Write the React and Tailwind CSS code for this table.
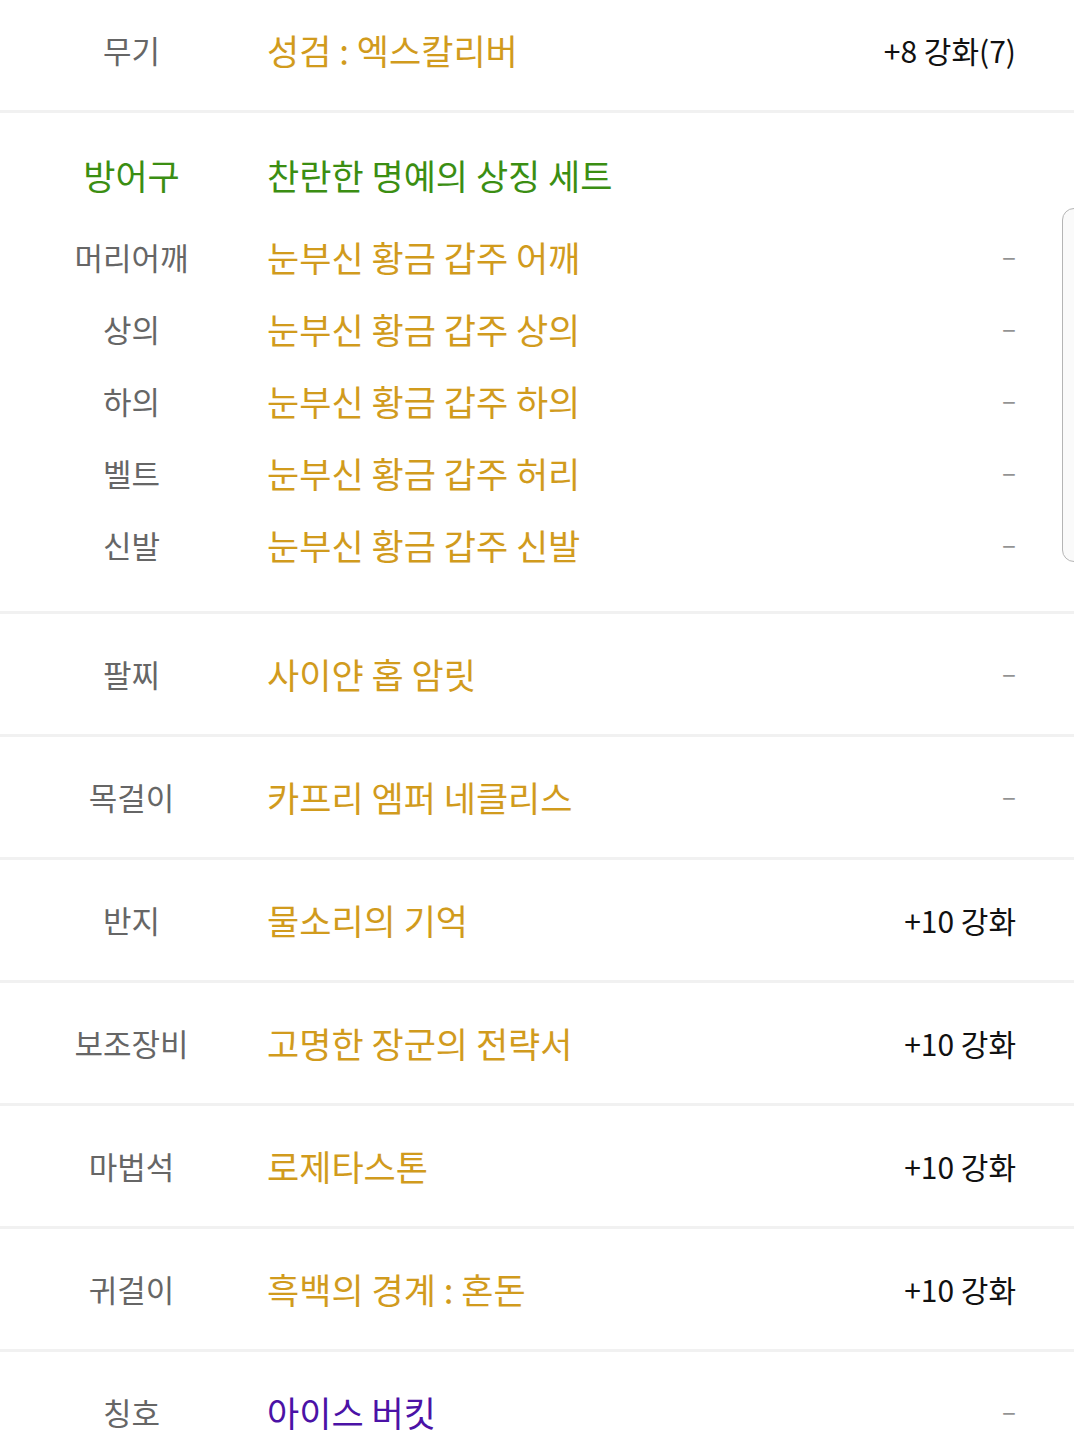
import React from 'react';

// Equipment rows shown below the armour set
const items = [
  { label: '팔찌', name: '사이얀 홉 암릿', value: null },
  { label: '목걸이', name: '카프리 엠퍼 네클리스', value: null },
  { label: '반지', name: '물소리의 기억', value: '+10 강화' },
  { label: '보조장비', name: '고명한 장군의 전략서', value: '+10 강화' },
  { label: '마법석', name: '로제타스톤', value: '+10 강화' },
  { label: '귀걸이', name: '흑백의 경계 : 혼돈', value: '+10 강화' },
  { label: '칭호', name: '아이스 버킷', value: null, purple: true },
];

const armor = [
  { label: '머리어깨', name: '눈부신 황금 갑주 어깨' },
  { label: '상의', name: '눈부신 황금 갑주 상의' },
  { label: '하의', name: '눈부신 황금 갑주 하의' },
  { label: '벨트', name: '눈부신 황금 갑주 허리' },
  { label: '신발', name: '눈부신 황금 갑주 신발' },
];

const Dash = () => (
  <span className="relative -top-[4px] text-[26px] leading-none text-[#939393]">–</span>
);

const Row = ({ label, name, value, nameClass = 'text-[#d19b1d]', labelClass = 'text-[#666666]', height = 'h-[120px]' }) => (
  <div className={`flex items-center ${height}`}>
    <div className={`w-[263px] shrink-0 text-center text-[31px] ${labelClass}`}>{label}</div>
    <div className={`ml-[4px] flex-1 text-[35px] ${nameClass}`}>{name}</div>
    <div className="pr-[58px] text-[30px] text-[#111111]">
      {value ? value : <Dash />}
    </div>
  </div>
);

const Divider = () => <div className="h-[3px] bg-[#f1f1f1]" />;

export default function App() {
  return (
    <div
      className="relative w-[1074px] h-[1446px] overflow-hidden bg-white"
      style={{ fontFamily: '"Noto Sans CJK KR", "Noto Sans", sans-serif' }}
    >
      {/* Weapon row, partly scrolled off the top */}
      <div className="-mt-[10px]">
        <Row label="무기" name="성검 : 엑스칼리버" value="+8 강화(7)" />
      </div>
      <Divider />

      {/* Armour set */}
      <div className="pt-[26px] pb-[30px]">
        <div className="flex items-center h-[72px] mb-[10px]">
          <div className="w-[263px] shrink-0 text-center text-[35px] text-[#3b8e12]">방어구</div>
          <div className="ml-[4px] text-[35px] text-[#3b8e12]">찬란한 명예의 상징 세트</div>
        </div>
        {armor.map((a) => (
          <Row key={a.label} label={a.label} name={a.name} height="h-[72px]" />
        ))}
      </div>
      <Divider />

      {items.map((it, i) => (
        <React.Fragment key={it.label}>
          <Row
            label={it.label}
            name={it.name}
            value={it.value}
            nameClass={it.purple ? 'text-[#4b12a6]' : 'text-[#d19b1d]'}
          />
          {i < items.length - 1 && <Divider />}
        </React.Fragment>
      ))}

      {/* Side handle overlay */}
      <div className="absolute left-[1062px] top-[208px] w-[20px] h-[354px] rounded-l-[12px] border border-[#b5b5b5] bg-[#fafafa]" />
    </div>
  );
}
